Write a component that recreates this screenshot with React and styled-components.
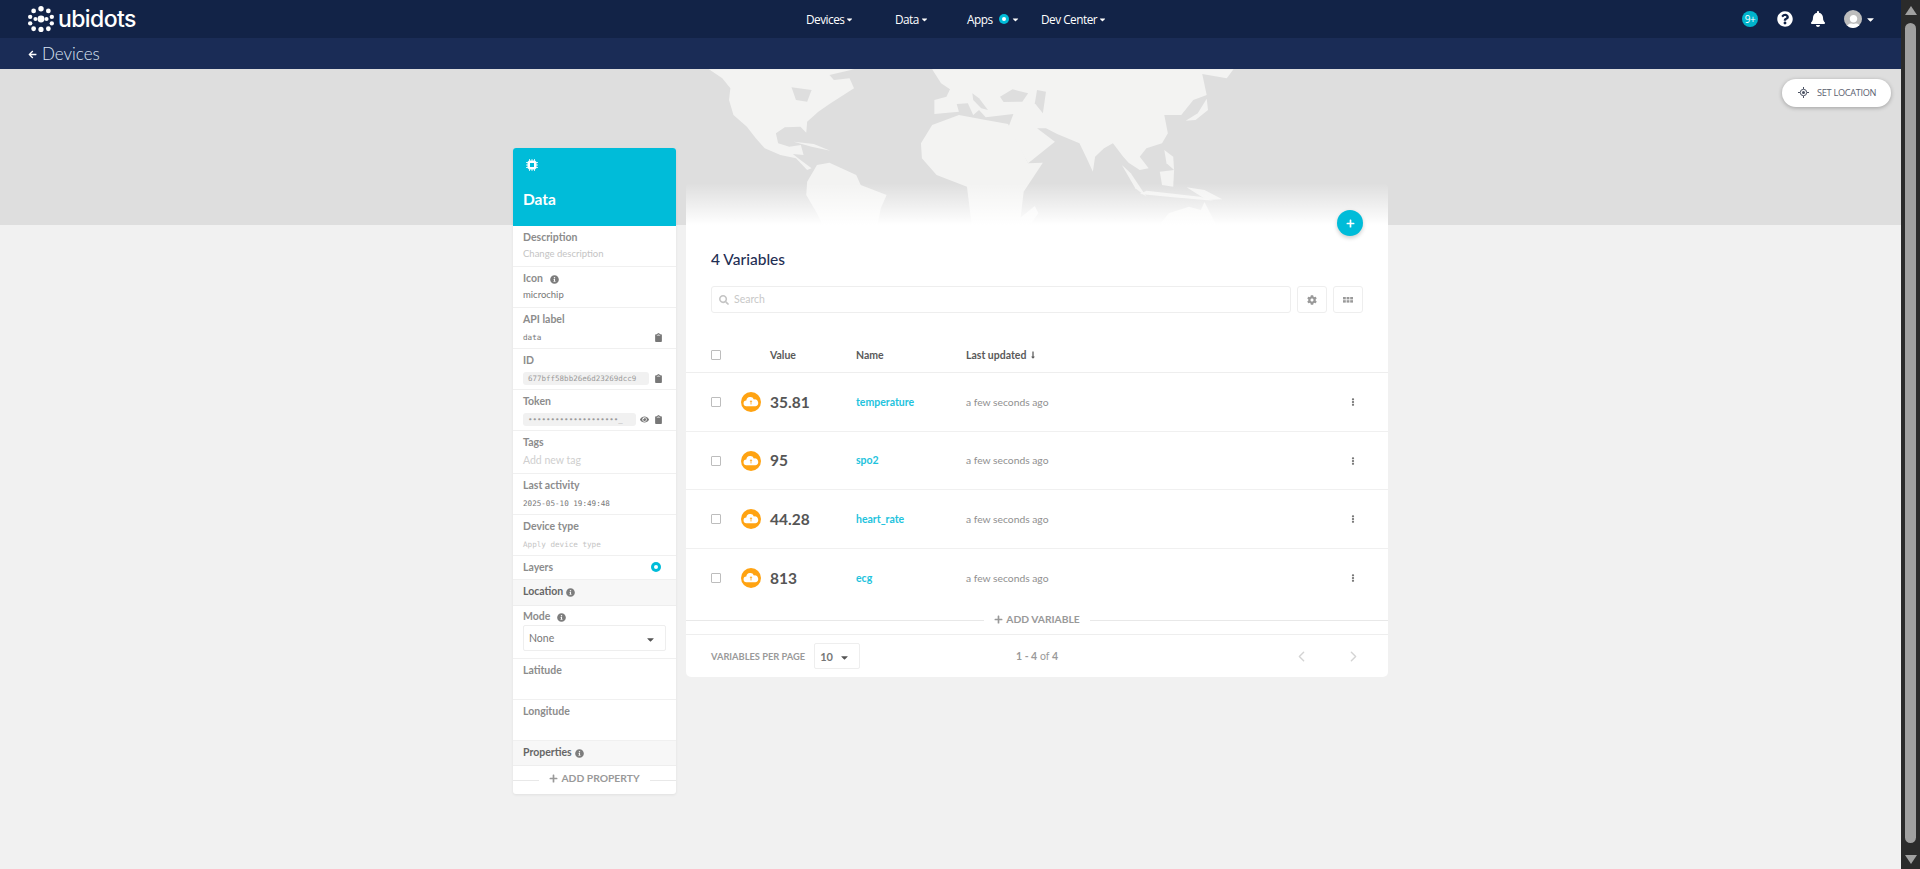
import React from 'react'
import styled, { createGlobalStyle } from 'styled-components'
import {
  FaBell, FaCaretDown, FaClipboard, FaCog, FaEllipsisV, FaEye, FaInfoCircle,
  FaPlus, FaQuestionCircle, FaSearch, FaUser, FaArrowLeft, FaLongArrowAltDown,
} from 'react-icons/fa'
import { FiChevronLeft, FiChevronRight } from 'react-icons/fi'

const GlobalStyle = createGlobalStyle`
  html, body { margin: 0; height: 100%; overflow: hidden; background: #f1f1f1; }
  body { font-family: 'Lato', 'Noto Sans', sans-serif; }
  * { box-sizing: border-box; }
`

const Shell = styled.div`
  display: flex;
  height: 869px;
  overflow: hidden;
`

const Page = styled.div`
  flex: 1;
  min-width: 0;
  background: #f1f1f1;
`

const Scrollbar = styled.div`
  width: 19px;
  background: #2b2b2b;
  display: flex;
  flex-direction: column;
  align-items: center;
  padding-top: 6px;
`

const ScrollArrow = styled.div`
  width: 0;
  height: 0;
  border-left: 6.5px solid transparent;
  border-right: 6.5px solid transparent;
  ${(p) => (p.$down ? 'border-top: 9px solid #a0a0a0;' : 'border-bottom: 9px solid #a0a0a0;')}
`

const ScrollThumb = styled.div`
  width: 11px;
  height: 820px;
  margin: 8px 0 12px;
  border-radius: 6px;
  background: #a0a0a0;
`

const TopBar = styled.header`
  height: 38px;
  background: #122347;
  display: flex;
  align-items: center;
  padding-left: 28px;
  color: #fff;
`

const Logo = styled.div`
  display: flex;
  align-items: center;
  gap: 4px;
  width: 778px;
`

const LogoText = styled.span`
  font-family: 'Inter', sans-serif;
  font-size: 23px;
  font-weight: 500;
  letter-spacing: -0.6px;
  line-height: 24px;
`

const Nav = styled.nav`
  display: flex;
  align-items: center;
  width: 740px;
`

const NavItem = styled.div`
  width: ${(p) => p.$w}px;
  display: flex;
  align-items: center;
  gap: 1px;
  font-family: 'Open Sans', sans-serif;
  font-size: 11.8px;
  letter-spacing: -0.5px;
  white-space: nowrap;
  svg { font-size: 9px; }
`

const Dot = styled.span`
  width: 10px;
  height: 10px;
  border-radius: 50%;
  background: #00bcd9;
  display: inline-flex;
  align-items: center;
  justify-content: center;
  flex: none;
  &::after {
    content: '';
    width: 40%;
    height: 40%;
    border-radius: 50%;
    background: #fff;
  }
`

const NavDot = styled(Dot)`
  margin: 0 1px 0 5px;
`

const TopActions = styled.div`
  display: flex;
  align-items: center;
`

const CountBadge = styled.span`
  width: 16px;
  height: 16px;
  border-radius: 50%;
  background: #00b4cc;
  font-family: 'Open Sans', sans-serif;
  font-size: 10px;
  letter-spacing: -0.5px;
  display: flex;
  align-items: center;
  justify-content: center;
  margin-right: 19px;
`

const ActionIcon = styled.span`
  display: flex;
  width: 16px;
  font-size: 16px;
  justify-content: center;
  margin-right: ${(p) => p.$mr}px;
`

const Avatar = styled.span`
  width: 18px;
  height: 18px;
  border-radius: 50%;
  background: #bdbdbd;
  overflow: hidden;
  display: flex;
  align-items: flex-end;
  justify-content: center;
  font-size: 15px;
  color: #fff;
  margin-right: 3px;
  svg { margin-bottom: -2px; }
`

const Spacer = styled.div`
  flex: 1;
`

const RightPad = styled.div`
  width: 25px;
`

const SubBar = styled.div`
  height: 31px;
  background: #1a2c56;
  display: flex;
  align-items: center;
  gap: 5px;
  padding-left: 28px;
  color: #dce6f5;
  font-family: 'Lato', sans-serif;
  font-size: 17px;
  font-weight: 300;
  svg { font-size: 9px; color: #fff; margin-top: 2px; }
`

const Banner = styled.div`
  position: relative;
  height: 156px;
  background: #dedede;
  overflow: hidden;
`

const MapArt = styled.svg`
  position: absolute;
  left: 700px;
  top: -69px;
  width: 700px;
  height: 230px;
`

const LocationButton = styled.button`
  position: absolute;
  right: 10px;
  top: 10px;
  width: 109px;
  height: 28px;
  border: 0;
  border-radius: 14px;
  background: #fff;
  box-shadow: 0 1px 4px rgba(0, 0, 0, 0.28);
  display: flex;
  align-items: center;
  gap: 8px;
  padding: 0 0 2px 16px;
  font-family: 'Open Sans', sans-serif;
  font-size: 9.2px;
  letter-spacing: -0.3px;
  color: #5b6170;
  white-space: nowrap;
`

const Content = styled.main`
  display: flex;
  align-items: flex-start;
  gap: 10px;
  margin-top: -77px;
  padding-left: 513px;
  position: relative;
`

const Sidebar = styled.aside`
  width: 163px;
  background: #fff;
  border-radius: 3px;
  box-shadow: 0 1px 3px rgba(0, 0, 0, 0.07);
  overflow: hidden;
`

const SideHead = styled.div`
  height: 78px;
  background: #00bcd9;
  color: #fff;
  padding: 11px 10px 0;
  svg { margin-left: 3px; display: block; }
`

const SideTitle = styled.h2`
  margin: 18px 0 0;
  font-size: 15.5px;
  line-height: 20px;
  font-weight: 700;
`

const Field = styled.div`
  height: ${(p) => p.$h}px;
  padding: ${(p) => p.$pt ?? 3}px 10px 0;
  border-bottom: 1px solid #f0f0f0;
`

const FieldLabel = styled.div`
  display: flex;
  align-items: center;
  gap: 7px;
  font-size: 10.5px;
  line-height: 16px;
  font-weight: 700;
  color: #8c8c8c;
  svg { font-size: 9px; color: #7d7d7d; margin-top: 3px; }
`

const FieldValue = styled.div`
  display: flex;
  align-items: center;
  justify-content: space-between;
  margin-top: 3px;
  height: 14px;
  font-size: ${(p) => (p.$mono ? 7.6 : 9.5)}px;
  font-family: ${(p) => (p.$mono ? "'DejaVu Sans Mono', monospace" : "'Lato', sans-serif")};
  color: ${(p) => (p.$muted ? '#c4c4c4' : '#777')};
  svg { font-size: 9px; color: #777; flex: none; }
`

const TextValue = styled(FieldValue)`
  margin-top: 1px;
`

const CopyIcon = styled(FaClipboard)`
  margin-right: 3px;
`

const CodeChip = styled.span`
  width: ${(p) => p.$w}px;
  height: 13px;
  padding-left: 5px;
  border-radius: 3px;
  background: #f1f1f1;
  color: #9a9a9a;
  font-family: 'DejaVu Sans Mono', monospace;
  font-size: 7.5px;
  line-height: 13px;
  white-space: nowrap;
  overflow: hidden;
`

const ChipIcons = styled.span`
  display: flex;
  align-items: center;
  gap: 5px;
`

const TagHint = styled.div`
  margin-top: 4px;
  font-size: 10.5px;
  color: #cfcfcf;
`

const LayerRow = styled(Field)`
  display: flex;
  align-items: center;
  justify-content: space-between;
  padding: 0 15px 2px 10px;
`

const GroupHead = styled.div`
  height: ${(p) => p.$h}px;
  padding: 3px 10px 0;
  background: #f7f7f7;
  border-bottom: 1px solid #eeeeee;
  ${FieldLabel} { color: #666; gap: 3px; }
`

const SelectBox = styled.div`
  width: ${(p) => p.$w}px;
  height: 26px;
  margin-top: ${(p) => p.$mt || 0}px;
  padding: 0 ${(p) => p.$pr}px 0 ${(p) => p.$pl}px;
  border: 1px solid #eeeeee;
  border-radius: 2px;
  background: #fff;
  display: flex;
  align-items: center;
  justify-content: space-between;
  font-size: ${(p) => p.$fs}px;
  color: #777;
  svg { font-size: 11px; color: #555; margin-top: 2px; }
`

const AddRule = styled.div`
  display: flex;
  align-items: center;
  gap: ${(p) => p.$gap}px;
  height: ${(p) => p.$h}px;
  font-size: ${(p) => p.$fs}px;
  font-weight: 700;
  color: #999;
  white-space: nowrap;
  &::before, &::after {
    content: '';
    flex: 1;
    height: 1px;
    background: #e8e8e8;
  }
  span { margin-top: -4px; }
  svg { font-size: 9px; margin-right: 3px; vertical-align: -1px; }
`

const Panel = styled.section`
  position: relative;
  width: 702px;
  margin-top: 35px;
  height: 494px;
  border-radius: 5px;
  background: linear-gradient(to bottom, rgba(255, 255, 255, 0) 0, #fff 42px);
`

const PlusButton = styled.button`
  position: absolute;
  right: 25px;
  top: 27px;
  width: 26px;
  height: 26px;
  border: 0;
  padding: 0;
  border-radius: 50%;
  background: #00bcd9;
  color: #fff;
  box-shadow: 0 2px 4px rgba(0, 0, 0, 0.2);
  display: flex;
  align-items: center;
  justify-content: center;
  font-size: 9px;
`

const PanelHead = styled.div`
  padding: 65px 25px 0;
`

const PanelTitle = styled.h1`
  margin: 0;
  font-size: 15.5px;
  line-height: 22px;
  font-weight: 500;
  color: #1f2f54;
`

const Toolbar = styled.div`
  display: flex;
  gap: 6px;
  margin-top: 16px;
`

const SearchBox = styled.div`
  flex: 1;
  height: 27px;
  border: 1px solid #eeeeee;
  border-radius: 3px;
  display: flex;
  align-items: center;
  gap: 5px;
  padding: 0 0 2px 7px;
  font-size: 10.5px;
  color: #c8c8c8;
  svg { font-size: 10px; color: #c4c4c4; margin-top: 2px; }
`

const ToolButton = styled.div`
  width: 30px;
  height: 27px;
  border: 1px solid #eeeeee;
  border-radius: 3px;
  display: flex;
  align-items: center;
  justify-content: center;
  color: #999;
  font-size: 10px;
`

const TableHead = styled.div`
  display: grid;
  grid-template-columns: 59px 86px 110px 1fr;
  align-items: center;
  height: 60px;
  padding: 25px 0 0 25px;
  border-bottom: 1px solid #eeeeee;
  font-size: 10.5px;
  font-weight: 700;
  color: #5a5a5a;
`

const CheckBox = styled.span`
  display: block;
  width: 10px;
  height: 10px;
  border: 1px solid #bdbdbd;
  border-radius: 1px;
  background: #fff;
`

const SortLabel = styled.span`
  display: flex;
  align-items: center;
  gap: 3px;
  svg { font-size: 8px; }
`

const Row = styled.div`
  display: grid;
  grid-template-columns: 30px 29px 86px 110px 1fr 39px;
  align-items: center;
  height: ${(p) => p.$h}px;
  padding-left: 25px;
  border-bottom: ${(p) => (p.$last ? '0' : '1px solid #f0f0f0')};
`

const Value = styled.span`
  font-size: 15.5px;
  font-weight: 700;
  color: #555;
  margin-bottom: 1px;
`

const VarName = styled.span`
  font-size: 10.5px;
  font-weight: 700;
  color: #1ec3dd;
  margin-bottom: 1px;
`

const Updated = styled.span`
  font-size: 10.3px;
  color: #8f8f8f;
  margin-bottom: 1px;
`

const Kebab = styled.span`
  color: #777;
  font-size: 8px;
  display: flex;
`

const Pager = styled.div`
  display: grid;
  grid-template-columns: 305px 130px 1fr;
  align-items: center;
  height: 43px;
  padding: 0 26px 0 25px;
  border-top: 1px solid #eeeeee;
`

const PerPage = styled.div`
  display: flex;
  align-items: center;
  gap: 9px;
  font-size: 9.3px;
  font-weight: 700;
  color: #9a9a9a;
  white-space: nowrap;
`

const PageCount = styled.div`
  font-size: 10.5px;
  color: #9a9a9a;
  b { font-weight: 700; }
`

const PageArrows = styled.div`
  display: flex;
  justify-content: flex-end;
  gap: 35px;
  color: #d4d4d4;
  font-size: 17px;
  svg { display: block; }
`

function LogoMark() {
  const dots = [
    [12, 2.5, 2.5], [5.2, 4.6, 2.2], [18.8, 4.6, 2.2], [2, 10, 2], [22, 10, 2],
    [2, 16, 2], [22, 16, 2], [5.2, 21, 2.2], [18.8, 21, 2.2], [12, 21.6, 2.4],
    [12, 12, 3.2], [6.9, 12, 1.9], [17.1, 12, 1.9],
  ]
  return (
    <svg width="26" height="26" viewBox="0 0 24 24" fill="#fff">
      {dots.map(([x, y, r]) => <circle key={`${x}-${y}`} cx={x} cy={y} r={r} />)}
    </svg>
  )
}

function ChipIcon() {
  return (
    <svg width="12" height="12" viewBox="0 0 12 12" fill="none" stroke="#fff">
      <rect x="2" y="2" width="8" height="8" rx="1.4" fill="#fff" />
      <rect x="4" y="4" width="4" height="4" fill="#00bcd9" stroke="none" />
      <path d="M3.5 0v12M6 0v12M8.5 0v12M0 3.5h12M0 6h12M0 8.5h12" strokeWidth="0.8" strokeDasharray="2 8" />
    </svg>
  )
}

function WorldMap() {
  const land = [
    // north and central america
    'M20 208 L50 235 L68 265 L65 300 L75 345 L105 380 L125 415 L145 445 L180 465 L215 475 L240 510 L250 505 L225 480 L208 462 L232 465 L226 435 L200 440 L175 430 L170 400 L190 382 L225 380 L238 398 L240 365 L265 335 L290 312 L345 265 L335 235 L300 240 L290 225 L345 208 Z',
    // south america
    'M240 545 L262 495 L290 488 L350 525 L360 555 L418 585 L405 625 L395 690 L280 690 L262 640 L238 585 Z',
    // eurasia
    'M520 208 L1195 208 L1180 235 L1125 222 L1135 285 L1105 300 L1078 345 L1040 345 L1048 400 L1035 430 L1000 445 L985 470 L1005 505 L985 510 L960 488 L948 470 L925 430 L905 445 L885 470 L880 515 L868 480 L850 430 L800 402 L775 385 L755 385 L795 425 L735 490 L705 420 L690 385 L702 342 L640 352 L625 330 L612 345 L600 310 L575 312 L580 335 L525 342 L525 300 L552 290 L560 268 L540 250 Z',
    // africa
    'M495 430 L520 375 L580 345 L640 360 L690 372 L735 490 L768 488 L725 575 L715 690 L610 690 L598 560 L530 525 L497 475 Z',
    // japan, madagascar, islands and australia
    'M1088 362 L1115 340 L1135 296 L1138 330 L1110 360 Z',
    'M750 618 L758 640 L730 690 L700 672 Z',
    'M945 495 L965 520 L1000 590 L975 565 Z',
    'M1030 515 L1062 510 L1060 560 L1035 555 Z',
    'M1040 450 L1060 470 L1062 510 L1045 490 Z',
    'M985 582 L1060 592 L1150 602 L1120 590 L1000 572 Z',
    'M1090 562 L1130 570 L1170 598 L1135 600 Z',
    'M1020 690 L1050 640 L1095 620 L1122 630 L1130 606 L1162 690 Z',
    'M210 425 L255 432 L292 452 L250 440 Z',
  ]
  return (
    <MapArt viewBox="0 0 1568 690" preserveAspectRatio="none" fill="#f3f3f2">
      {land.map((d) => <path key={d} d={d} />)}
      <g fill="#dedede">
        <path d="M755 270 L775 275 L768 340 L750 310 Z" />
        <path d="M672 290 L700 268 L735 280 L722 305 L680 306 Z" />
        <path d="M610 280 L625 295 L645 330 L630 325 L612 300 Z" />
        <path d="M205 262 L250 270 L240 305 L215 300 Z" />
      </g>
    </MapArt>
  )
}

function CloudIcon() {
  return (
    <svg width="20" height="20" viewBox="0 0 20 20">
      <circle cx="10" cy="10" r="10" fill="#ffa312" />
      <path d="M5.6 14.2a2.9 2.9 0 0 1-.3-5.8 4 4 0 0 1 7.6-1 3.4 3.4 0 0 1 1.6 6.8z" fill="#fff" />
      <path d="M9.6 12.6V9.8H8.6L10 8.2l1.4 1.6h-1v2.8z" fill="#ffa312" />
    </svg>
  )
}

function TargetIcon() {
  return (
    <svg width="11" height="11" viewBox="0 0 11 11" fill="none" stroke="#4a5162">
      <circle cx="5.5" cy="5.5" r="3.2" />
      <circle cx="5.5" cy="5.5" r="1.5" fill="#4a5162" stroke="none" />
      <path d="M5.5 0v2M5.5 9v2M0 5.5h2M9 5.5h2" />
    </svg>
  )
}

function ColumnsIcon() {
  return (
    <svg width="10" height="6" viewBox="0 0 10 6" fill="#999">
      {[0, 3.6, 7.2].map((x) => (
        <React.Fragment key={x}>
          <rect x={x} y="0" width="2.8" height="2.4" />
          <rect x={x} y="3.2" width="2.8" height="2.4" />
        </React.Fragment>
      ))}
    </svg>
  )
}

const variables = [
  { value: '35.81', name: 'temperature', h: 59 },
  { value: '95', name: 'spo2', h: 58 },
  { value: '44.28', name: 'heart_rate', h: 59 },
  { value: '813', name: 'ecg', h: 58, last: true },
]

export default function App() {
  return (
    <Shell>
      <GlobalStyle />
      <Page>
        <TopBar>
          <Logo>
            <LogoMark />
            <LogoText>ubidots</LogoText>
          </Logo>
          <Nav>
            <NavItem $w={89}>Devices <FaCaretDown /></NavItem>
            <NavItem $w={72}>Data <FaCaretDown /></NavItem>
            <NavItem $w={74}>Apps <NavDot /><FaCaretDown /></NavItem>
            <NavItem $w={140}>Dev Center <FaCaretDown /></NavItem>
          </Nav>
          <Spacer />
          <TopActions>
            <CountBadge>9+</CountBadge>
            <ActionIcon $mr={17}><FaQuestionCircle /></ActionIcon>
            <ActionIcon $mr={18}><FaBell /></ActionIcon>
            <Avatar><FaUser /></Avatar>
            <FaCaretDown size={11} />
          </TopActions>
          <RightPad />
        </TopBar>
        <SubBar><FaArrowLeft /> Devices</SubBar>
        <Banner>
          <WorldMap />
          <LocationButton><TargetIcon /> SET LOCATION</LocationButton>
        </Banner>
        <Content>
          <Sidebar>
            <SideHead>
              <ChipIcon />
              <SideTitle>Data</SideTitle>
            </SideHead>
            <Field $h={41}>
              <FieldLabel>Description</FieldLabel>
              <TextValue $muted>Change description</TextValue>
            </Field>
            <Field $h={41}>
              <FieldLabel>Icon <FaInfoCircle /></FieldLabel>
              <TextValue>microchip</TextValue>
            </Field>
            <Field $h={41}>
              <FieldLabel>API label</FieldLabel>
              <FieldValue $mono>data <CopyIcon /></FieldValue>
            </Field>
            <Field $h={41}>
              <FieldLabel>ID</FieldLabel>
              <FieldValue>
                <CodeChip $w={126}>677bff58bb26e6d23269dcc9</CodeChip>
                <CopyIcon />
              </FieldValue>
            </Field>
            <Field $h={41}>
              <FieldLabel>Token</FieldLabel>
              <FieldValue>
                <CodeChip $w={113}>••••••••••••••••••••_</CodeChip>
                <ChipIcons><FaEye /><CopyIcon /></ChipIcons>
              </FieldValue>
            </Field>
            <Field $h={43}>
              <FieldLabel>Tags</FieldLabel>
              <TagHint>Add new tag</TagHint>
            </Field>
            <Field $h={41}>
              <FieldLabel>Last activity</FieldLabel>
              <FieldValue $mono>2025-05-10 19:49:48</FieldValue>
            </Field>
            <Field $h={41}>
              <FieldLabel>Device type</FieldLabel>
              <FieldValue $mono $muted>Apply device type</FieldValue>
            </Field>
            <LayerRow $h={24}>
              <FieldLabel>Layers</FieldLabel>
              <Dot />
            </LayerRow>
            <GroupHead $h={26}>
              <FieldLabel>Location <FaInfoCircle /></FieldLabel>
            </GroupHead>
            <Field $h={53} $pt={2}>
              <FieldLabel>Mode <FaInfoCircle /></FieldLabel>
              <SelectBox $w={143} $mt={1} $pl={5} $pr={9} $fs={10.5}>None <FaCaretDown /></SelectBox>
            </Field>
            <Field $h={41}><FieldLabel>Latitude</FieldLabel></Field>
            <Field $h={41}><FieldLabel>Longitude</FieldLabel></Field>
            <GroupHead $h={25}>
              <FieldLabel>Properties <FaInfoCircle /></FieldLabel>
            </GroupHead>
            <AddRule $h={28} $gap={10} $fs={10.3}>
              <span><FaPlus />ADD PROPERTY</span>
            </AddRule>
          </Sidebar>
          <Panel>
            <PlusButton><FaPlus /></PlusButton>
            <PanelHead>
              <PanelTitle>4 Variables</PanelTitle>
              <Toolbar>
                <SearchBox><FaSearch /> Search</SearchBox>
                <ToolButton><FaCog /></ToolButton>
                <ToolButton><ColumnsIcon /></ToolButton>
              </Toolbar>
            </PanelHead>
            <TableHead>
              <CheckBox />
              <span>Value</span>
              <span>Name</span>
              <SortLabel>Last updated <FaLongArrowAltDown /></SortLabel>
            </TableHead>
            {variables.map((v) => (
              <Row key={v.name} $h={v.h} $last={v.last}>
                <CheckBox />
                <CloudIcon />
                <Value>{v.value}</Value>
                <VarName>{v.name}</VarName>
                <Updated>a few seconds ago</Updated>
                <Kebab><FaEllipsisV /></Kebab>
              </Row>
            ))}
            <AddRule $h={27} $gap={10} $fs={10.3}>
              <span><FaPlus />ADD VARIABLE</span>
            </AddRule>
            <Pager>
              <PerPage>
                VARIABLES PER PAGE
                <SelectBox $w={46} $pl={5} $pr={9} $fs={11}>10 <FaCaretDown /></SelectBox>
              </PerPage>
              <PageCount><b>1 - 4</b> of <b>4</b></PageCount>
              <PageArrows><FiChevronLeft /><FiChevronRight /></PageArrows>
            </Pager>
          </Panel>
        </Content>
      </Page>
      <Scrollbar>
        <ScrollArrow />
        <ScrollThumb />
        <ScrollArrow $down />
      </Scrollbar>
    </Shell>
  )
}
